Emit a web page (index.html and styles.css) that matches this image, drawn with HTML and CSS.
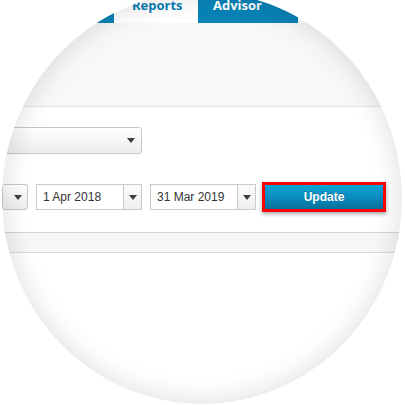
FILE: index.html
```html
<!DOCTYPE html>
<html lang="en">
<head>
<meta charset="utf-8">
<title>Reports – date filter</title>
<link rel="stylesheet" href="styles.css">
</head>
<body>
<div class="lens">
  <div class="page">
    <nav class="tabs">
      <div class="tab tab-first" aria-hidden="true"></div>
      <div class="tab tab-active">Reports</div>
      <div class="tab tab-next">Advisor</div>
    </nav>
    <div class="subbar"></div>
    <section class="filters">
      <div class="row-top">
        <div class="select select-wide"><span class="caret"></span></div>
      </div>
      <div class="row-dates">
        <div class="select select-narrow"><span class="caret"></span></div>
        <div class="datebox">
          <span class="dateval">1 Apr 2018</span>
          <span class="datebtn"><span class="caret"></span></span>
        </div>
        <div class="datebox">
          <span class="dateval">31 Mar 2019</span>
          <span class="datebtn"><span class="caret"></span></span>
        </div>
        <div class="update-wrap"><button class="update" type="button">Update</button></div>
      </div>
    </section>
    <div class="band"></div>
    <div class="rest"></div>
  </div>
</div>
</body>
</html>
```
FILE: styles.css
```css
html, body {
  margin: 0;
  padding: 0;
  background: #ffffff;
}

body {
  padding-left: 2px;
  overflow: hidden;
}

.lens {
  position: relative;
  width: 400px;
  height: 412px;
  margin-top: -8px;
  border-radius: 50%;
  overflow: hidden;
  background: #ffffff;
}

.lens::after {
  content: "";
  position: absolute;
  inset: 0;
  border-radius: 50%;
  box-shadow: inset 0 0 26px 3px rgba(0, 0, 0, 0.12);
  pointer-events: none;
}

.page {
  display: flex;
  flex-direction: column;
  width: 100%;
  height: 100%;
}

/* ---------- tabs ---------- */
.tabs {
  display: flex;
  height: 31px;
  background: #ffffff;
  font-family: "Open Sans", "Liberation Sans", sans-serif;
  font-weight: 700;
  font-size: 13px;
  line-height: 18px;
}

.tab {
  box-sizing: border-box;
  height: 31px;
  padding-top: 4px;
  white-space: nowrap;
  overflow: hidden;
}

.tab-first {
  width: 112px;
  background: #0883b6;
}

.tab-active {
  width: 84px;
  padding-left: 18px;
  background: #ffffff;
  color: #0a7db2;
}

.tab-next {
  width: 100px;
  padding-left: 15px;
  background: #0883b6;
  color: #ffffff;
}

/* ---------- grey sub bar ---------- */
.subbar {
  height: 83px;
  background: #f7f8f8;
  border-bottom: 1px solid #e4e6e6;
}

/* ---------- filters ---------- */
.filters {
  padding: 20px 0 20px 0;
  background: #ffffff;
  border-bottom: 1px solid #d2d5d5;
  font-family: "Liberation Sans", Arial, sans-serif;
  font-size: 12px;
  color: #333333;
}

.row-top {
  display: flex;
}

.select {
  box-sizing: border-box;
  display: flex;
  align-items: center;
  justify-content: flex-end;
  border: 1px solid #c6c8c8;
  border-radius: 3px;
  background: linear-gradient(#ffffff, #ededed);
}

.select-wide {
  width: 140px;
  height: 27px;
  padding-right: 6px;
}

.select-narrow {
  width: 26px;
  height: 26px;
  padding-right: 5px;
}

.caret {
  width: 0;
  height: 0;
  border-left: 4px solid transparent;
  border-right: 4px solid transparent;
  border-top: 5px solid #3c3c3c;
}

.row-dates {
  display: flex;
  align-items: center;
  gap: 8px;
  height: 30px;
  margin-top: 28px;
}

.datebox {
  box-sizing: border-box;
  display: flex;
  width: 106px;
  height: 26px;
  border: 1px solid #c9cbcb;
  background: #ffffff;
}

.dateval {
  flex: 1;
  padding-left: 6px;
  line-height: 24px;
  white-space: nowrap;
}

.datebtn {
  width: 17px;
  display: flex;
  align-items: center;
  justify-content: center;
  border-left: 1px solid #c9cbcb;
  background: linear-gradient(#fbfbfb, #eeeeee);
}

.update-wrap {
  box-sizing: border-box;
  width: 124px;
  height: 30px;
  margin-left: -2px;
  border: 3px solid #ff0000;
  box-shadow: 0 2px 4px rgba(0, 0, 0, 0.35);
  display: flex;
}

.update {
  flex: 1;
  margin: 0;
  padding: 0;
  border: 0;
  background: linear-gradient(#0ba5d6, #0a8dbf 50%, #076f9b);
  color: #ffffff;
  font-family: "Liberation Sans", Arial, sans-serif;
  font-weight: 700;
  font-size: 12px;
  text-shadow: 0 -1px 0 rgba(0, 0, 0, 0.25);
}

/* ---------- bottom band ---------- */
.band {
  height: 19px;
  background: #f6f7f7;
  border-bottom: 1px solid #d9dcdc;
}

.rest {
  flex: 1;
  background: #ffffff;
}
```
